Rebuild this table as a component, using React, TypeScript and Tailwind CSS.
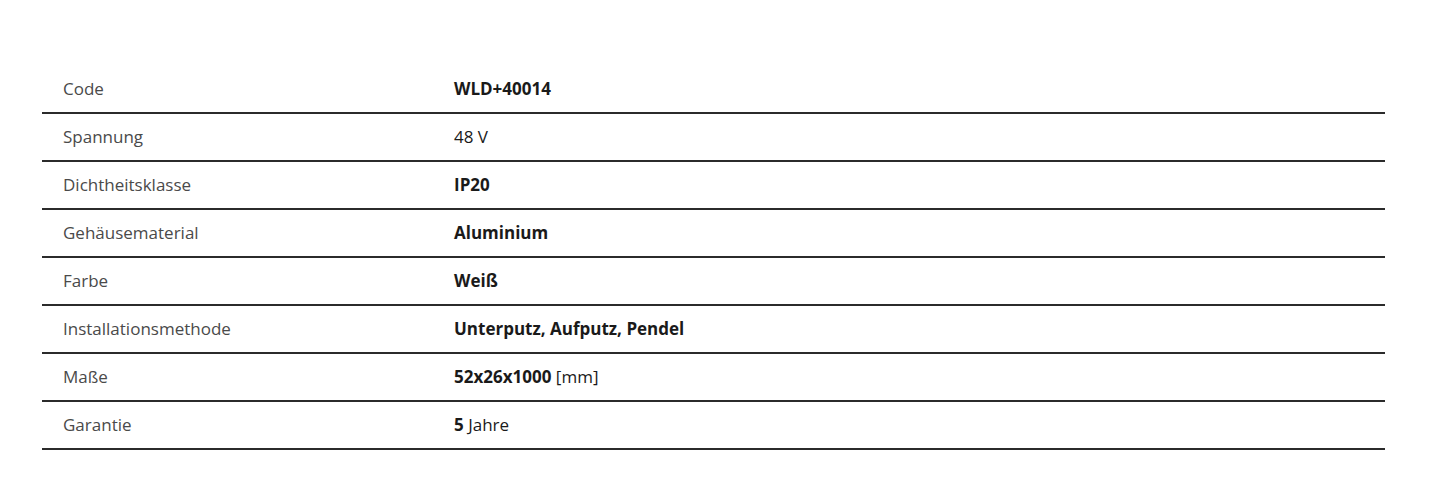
const rows: { label: string; value: React.ReactNode }[] = [
  { label: 'Code', value: <b className="font-bold">WLD+40014</b> },
  { label: 'Spannung', value: '48 V' },
  { label: 'Dichtheitsklasse', value: <b className="font-bold">IP20</b> },
  { label: 'Gehäusematerial', value: <b className="font-bold">Aluminium</b> },
  { label: 'Farbe', value: <b className="font-bold">Weiß</b> },
  { label: 'Installationsmethode', value: <b className="font-bold">Unterputz, Aufputz, Pendel</b> },
  {
    label: 'Maße',
    value: (
      <>
        <b className="font-bold">52x26x1000</b> [mm]
      </>
    ),
  },
  {
    label: 'Garantie',
    value: (
      <>
        <b className="font-bold">5</b> Jahre
      </>
    ),
  },
];

const App = () => {
  return (
    <div className="w-[1445px] h-[504px] bg-white pt-[66px] pl-[42px] font-['Open_Sans',sans-serif]">
      <div className="w-[1343px]">
        {rows.map((row) => (
          <div
            key={row.label}
            className="flex items-center h-[48px] border-b-2 border-[#2b2b2b] text-[17px]"
          >
            <div className="w-[412px] pl-[21px] text-[#4a4a4a]">{row.label}</div>
            <div className="flex-1 text-[#1a1a1a]">{row.value}</div>
          </div>
        ))}
      </div>
    </div>
  );
};

export default App;
